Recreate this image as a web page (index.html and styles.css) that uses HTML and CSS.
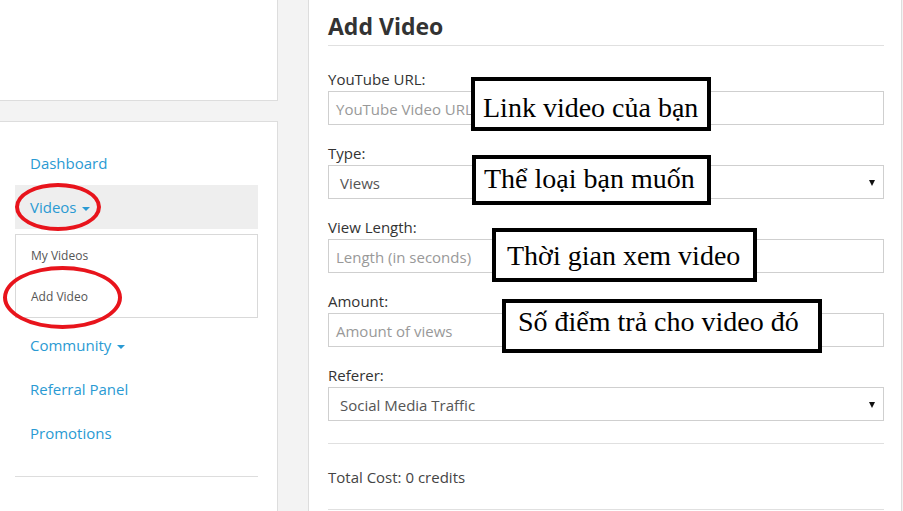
FILE: index.html
```html
<!DOCTYPE html>
<html>
<head>
<meta charset="utf-8">
<link rel="stylesheet" href="styles.css">
</head>
<body>
<div class="page">
  <aside class="side">
    <div class="side-top"></div>
    <div class="side-menu">
      <ul class="menu">
        <li class="item"><a>Dashboard</a></li>
        <li class="item active"><a>Videos <span class="caret"></span></a></li>
        <li class="sub">
          <div class="sub-item">My Videos</div>
          <div class="sub-item">Add Video</div>
        </li>
        <li class="item"><a>Community <span class="caret"></span></a></li>
        <li class="item"><a>Referral Panel</a></li>
        <li class="item"><a>Promotions</a></li>
      </ul>
      <div class="side-rule"></div>
    </div>
  </aside>
  <main class="main">
    <h1 class="title">Add Video</h1>
    <div class="rule"></div>
    <div class="group">
      <div class="label">YouTube URL:</div>
      <div class="control placeholder">YouTube Video URL</div>
    </div>
    <div class="group">
      <div class="label">Type:</div>
      <div class="control select"><span>Views</span><span class="arrow"></span></div>
    </div>
    <div class="group">
      <div class="label">View Length:</div>
      <div class="control placeholder">Length (in seconds)</div>
    </div>
    <div class="group">
      <div class="label">Amount:</div>
      <div class="control placeholder">Amount of views</div>
    </div>
    <div class="group">
      <div class="label">Referer:</div>
      <div class="control select"><span>Social Media Traffic</span><span class="arrow"></span></div>
    </div>
    <div class="rule rule-mid"></div>
    <div class="total">Total Cost: 0 credits</div>
    <div class="rule rule-end"></div>
  </main>
</div>

<div class="note note1">Link video của bạn</div>
<div class="note note2">Thể loại bạn muốn</div>
<div class="note note3">Thời gian xem video</div>
<div class="note note4">Số điểm trả cho video đó</div>

<div class="ring ring1"></div>
<div class="ring ring2"></div>
</body>
</html>
```

FILE: styles.css
```css
html, body {
  margin: 0;
  padding: 0;
}
body {
  background: #f3f3f3;
  font-family: "Open Sans", "Liberation Sans", sans-serif;
  width: 903px;
  height: 511px;
  overflow: hidden;
  position: relative;
}
.page {
  display: flex;
  gap: 30px;
  height: 511px;
}
.side {
  width: 278px;
  display: flex;
  flex-direction: column;
  gap: 20px;
}
.side-top {
  height: 100px;
  background: #fff;
  border-right: 1px solid #ddd;
  border-bottom: 1px solid #ddd;
}
.side-menu {
  flex: 1;
  background: #fff;
  border-top: 1px solid #ddd;
  border-right: 1px solid #ddd;
  padding: 19px 19px 0 15px;
}
.menu {
  list-style: none;
  margin: 0;
  padding: 0;
}
.item {
  height: 44px;
  display: flex;
  align-items: center;
  padding-left: 15px;
  font-size: 15px;
  color: #2a9ad3;
}
.item.active {
  background: #eeeeee;
}
.caret {
  display: inline-block;
  width: 0;
  height: 0;
  border-left: 4px solid transparent;
  border-right: 4px solid transparent;
  border-top: 4px solid #2a9ad3;
  vertical-align: middle;
  margin-left: 2px;
}
.sub {
  margin: 5px 0;
  border: 1px solid #d9d9d9;
}
.sub-item {
  height: 41px;
  display: flex;
  align-items: center;
  padding-left: 15px;
  font-size: 12px;
  color: #555;
}
.side-rule {
  margin-top: 21px;
  border-top: 1px solid #ddd;
}
.main {
  width: 556px;
  background: #fff;
  border-left: 1px solid #ddd;
  border-right: 1px solid #ddd;
  padding: 11px 17px 0 19px;
}
.title {
  margin: 0;
  font-size: 23px;
  line-height: 30px;
  font-weight: 700;
  color: #333;
}
.rule {
  border-top: 1px solid #e0e0e0;
  margin-top: 4px;
}
.group {
  margin-bottom: 18px;
}
.rule + .group {
  margin-top: 23px;
}
.label {
  font-size: 15px;
  line-height: 20px;
  color: #333;
  margin-bottom: 2px;
}
.control {
  height: 34px;
  box-sizing: border-box;
  border: 1px solid #cfcfcf;
  display: flex;
  align-items: center;
  font-size: 15px;
  padding-left: 7px;
  padding-top: 1px;
}
.placeholder {
  color: #999;
}
.select {
  color: #555;
  padding-left: 11px;
  padding-right: 8px;
  padding-top: 2px;
  justify-content: space-between;
}
.arrow {
  width: 0;
  height: 0;
  border-left: 3.5px solid transparent;
  border-right: 3.5px solid transparent;
  border-top: 6px solid #111;
}
.rule-mid {
  margin-top: 22px;
}
.total {
  margin-top: 23px;
  font-size: 15px;
  line-height: 20px;
  color: #444;
}
.rule-end {
  margin-top: 22px;
}
.note {
  position: absolute;
  box-sizing: border-box;
  border: 4px solid #000;
  background: #fff;
  font-family: "Liberation Serif", "Times New Roman", serif;
  font-size: 28px;
  color: #000;
  display: flex;
  align-items: center;
  padding-left: 8px;
  white-space: nowrap;
}
.note1 { left: 471px; top: 77px; width: 240px; height: 54px; padding-top: 7px; }
.note2 { left: 472px; top: 155px; width: 239px; height: 50px; padding-bottom: 2px; }
.note3 { left: 492px; top: 228px; width: 265px; height: 54px; padding-left: 11px; padding-top: 2px; }
.note4 { left: 502px; top: 299px; width: 320px; height: 54px; padding-left: 12px; padding-bottom: 8px; }
.ring {
  position: absolute;
  box-sizing: border-box;
  border: 4px solid #e8141c;
  border-radius: 50%;
}
.ring1 { left: 15px; top: 183px; width: 86px; height: 48px; }
.ring2 { left: 3px; top: 266px; width: 119px; height: 63px; }
```
